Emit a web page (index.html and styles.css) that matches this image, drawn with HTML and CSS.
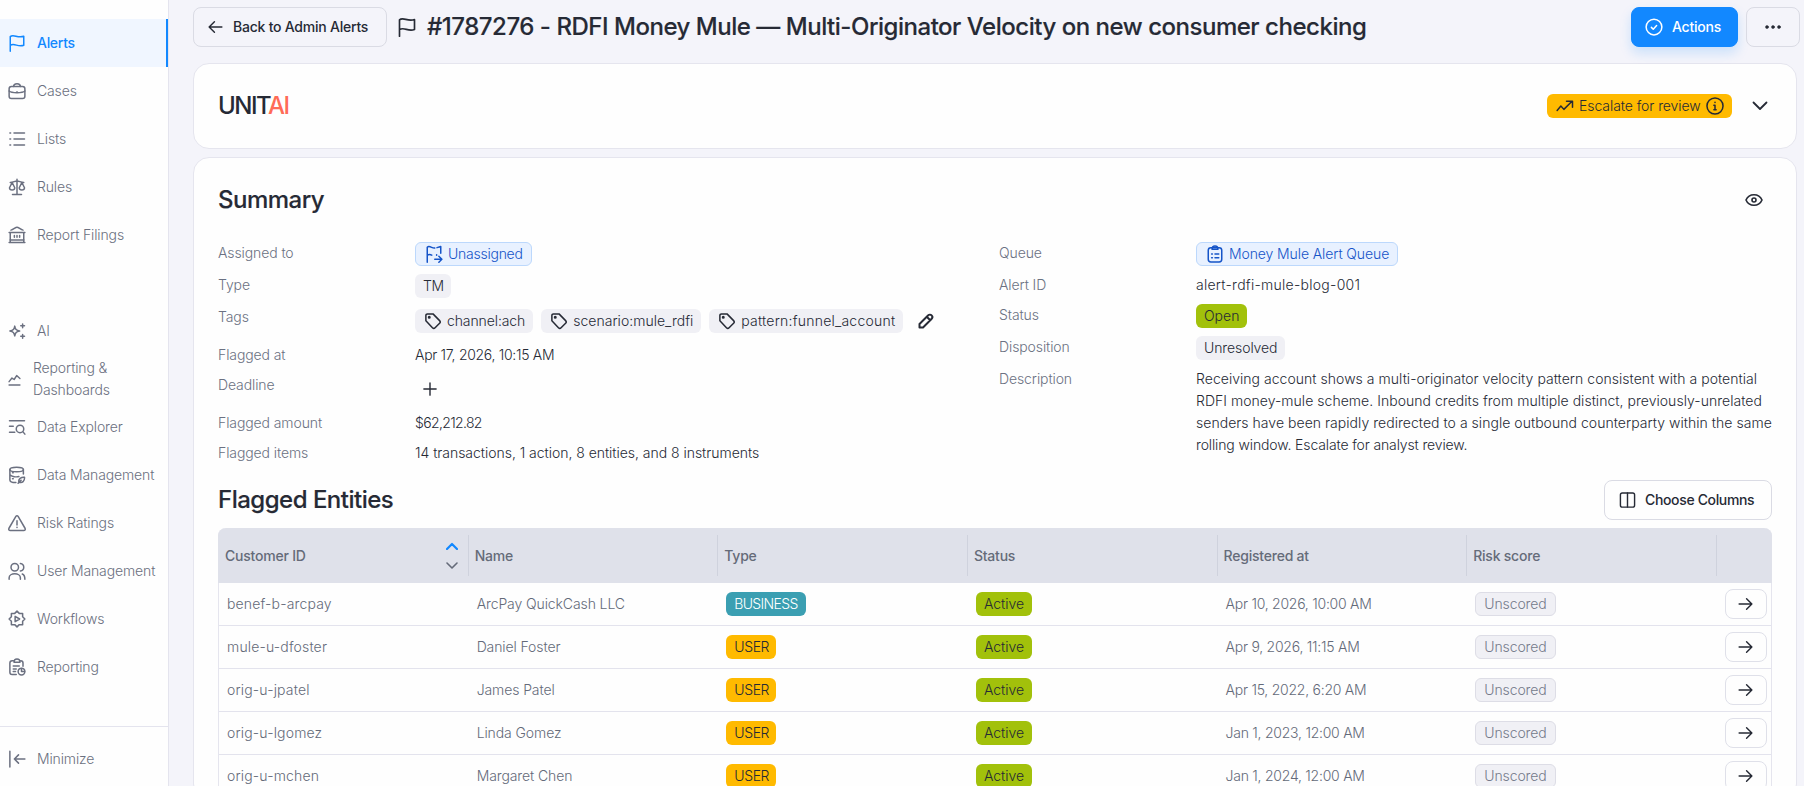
FILE: index.html
```html
<!DOCTYPE html>
<html lang="en">

<head>
  <meta charset="UTF-8">
  <meta name="viewport" content="width=device-width, initial-scale=1.0">
  <title>Alert #1787276</title>
  <link rel="stylesheet" href="styles.css">
</head>

<body>

  <!-- Shared icons -->
  <svg class="sprite" width="0" height="0">
    <symbol id="flag" viewBox="0 0 24 24"><path d="M3 23V3.500c4-4 10 2.500 18-.5v12c-8 3-12-3.500-18 0"/></symbol>
    <symbol id="arrow" viewBox="0 0 24 24"><path d="M3 12h18M13.500 4.500L21 12l-7.500 7.500"/></symbol>
    <symbol id="tag" viewBox="0 0 24 24"><path d="M2.500 4.500v7.200L11.300 21a2.500 2.500 0 0 0 3.500 0l6-6a2.500 2.500 0 0 0 0-3.500L12 2.500H4.500a2 2 0 0 0-2 2z"/><circle cx="7" cy="7" r="1"/></symbol>
  </svg>

  <div class="app">
    <nav class="sidebar">
      <a class="nav-item active"><svg><use href="#flag"/></svg>Alerts</a>
      <a class="nav-item"><svg viewBox="0 0 24 24"><rect x="1.500" y="6" width="21" height="16" rx="3"/><path d="M7.500 6c0-5 9-5 9 0M1.500 12c3 3 18 3 21 0M12 13v1"/></svg>Cases</a>
      <a class="nav-item"><svg viewBox="0 0 24 24"><path d="M8 4h14M8 12h14M8 20h14M2.500 4h1M2.500 12h1M2.500 20h1"/></svg>Lists</a>
      <a class="nav-item"><svg viewBox="0 0 24 24"><path d="M12 1.500V22M6 22h12M3 6c4 0 6-2 9-2s5 2 9 2M5.500 6L2 13c0 4 7 4 7 0zM18.500 6L15 13c0 4 7 4 7 0z"/></svg>Rules</a>
      <a class="nav-item"><svg viewBox="0 0 24 24"><path d="M1.500 8.500h21M3 8.500V22M21 8.500V22M1.500 22h21M2.500 18.500h19M4 5.500C7 5 10 1.500 12 1.500s5 3.500 8 4M8.500 12.500v2.500M12 12.500v2.500M15.500 12.500v2.500"/></svg>Report Filings</a>

      <a class="nav-item second-group"><svg viewBox="0 0 24 24"><path d="M9 5.500c.8 4.500 2 5.500 6.500 6.500-4.500 1-5.700 2-6.500 6.500-.8-4.500-2-5.500-6.500-6.500 4.500-1 5.700-2 6.500-6.500zM19.500 2.500v5M17 5h5M19.500 16.500v5M17 19h5"/></svg>AI</a>
      <a class="nav-item small-icon"><svg viewBox="0 0 18 18"><path d="M1.500 16.500h15M1.500 12l4-5 3 2L12 3.500l4.500 4"/></svg><span>Reporting &amp;<br>Dashboards</span></a>
      <a class="nav-item"><svg viewBox="0 0 24 24"><path d="M2 3.500h20M2 11h5M2 19h7M20 18.500l2.500 3"/><circle cx="16" cy="14.500" r="5"/></svg>Data Explorer</a>
      <a class="nav-item"><svg viewBox="0 0 24 24"><ellipse cx="11.500" cy="4.500" rx="9" ry="3"/><path d="M2.500 4.500v14c0 2 3 3.500 8 3.500M20.500 4.500v6M2.500 11.500c2 3 9 3.500 12 2.500M6 9h1M6 17h1M14.500 21.500c-1-4 3-7 7.500-6.500.5 5-3 8.500-7.500 6.500zM13.500 23l4-4"/></svg>Data Management</a>
      <a class="nav-item"><svg viewBox="0 0 24 24"><path d="M10.500 3.200L1.300 19c-.8 1.500 0 3 1.700 3h18c1.700 0 2.500-1.500 1.700-3L13.500 3.200c-.8-1.300-2.200-1.300-3 0zM12 9v5.500M12 17.500v.5"/></svg>Risk Ratings</a>
      <a class="nav-item"><svg viewBox="0 0 24 24"><circle cx="9" cy="7" r="5"/><path d="M1.500 23v-2c0-7 15-7 15 0v2M16.500 2c6 1 6 9 0 10M19 16c2.500 1 3.500 3 3.500 7"/></svg>User Management</a>
      <a class="nav-item"><svg viewBox="0 0 24 24"><path d="M12 1.500l3 3h4.500V9l3 3-3 3v4.500H15l-3 3-3-3H4.500V15l-3-3 3-3V4.500H9zM9.500 8.500v7l6-3.500z"/></svg>Workflows</a>
      <a class="nav-item"><svg viewBox="0 0 24 24"><path d="M7 3.500H5.500a3 3 0 0 0-3 3V19a3 3 0 0 0 3 3H11M17 3.500a3 3 0 0 1 3 3V11M8 5.500h8c0-5.500-8-5.500-8 0zM7 10.500h8M7 14.500h4M7 18h3"/><circle cx="18" cy="18" r="4.500"/><path d="M18 14v4h4"/></svg>Reporting</a>

      <a class="nav-item minimize"><svg viewBox="0 0 24 24"><path d="M2.500 1.500v21M8.500 12h14M14 6.500L8.500 12l5.500 5.500"/></svg>Minimize</a>
    </nav>

    <main class="content">
      <header class="page-header">
        <button class="btn back"><svg class="flip"><use href="#arrow"/></svg>Back to Admin Alerts</button>
        <svg class="title-flag"><use href="#flag"/></svg>
        <h1>#1787276 - RDFI Money Mule — Multi-Originator Velocity on new consumer checking</h1>
        <button class="btn primary"><svg viewBox="0 0 24 24"><circle cx="12" cy="12" r="10.500"/><path d="M8.500 12.500l2.500 2.500 4.500-5"/></svg>Actions</button>
        <button class="btn more"><svg viewBox="0 0 18 18"><circle cx="3" cy="9" r="1.500"/><circle cx="9" cy="9" r="1.500"/><circle cx="15" cy="9" r="1.500"/></svg></button>
      </header>

      <section class="card ai-card">
        <div class="logo">UNIT<span>AI</span></div>
        <div class="badge escalate">
          <svg viewBox="0 0 24 24"><path d="M1.500 18l5-6 4 4.500L21 6M14 5.500h8v8"/></svg>
          <b>Escalate for review</b>
          <svg class="info" viewBox="0 0 24 24"><circle cx="12" cy="12" r="10.700"/><path d="M10.500 11H12v5.500M10.500 17h3M12 7v.3"/></svg>
        </div>
        <svg class="chevron" viewBox="0 0 16 16"><path d="M1.500 4.500L8 11l6.500-6.500"/></svg>
      </section>

      <section class="card">
        <div class="section-head summary-head">
          <h2>Summary</h2>
          <svg class="eye" viewBox="0 0 18 18"><path d="M1 9c3-7 13-7 16 0-3 7-13 7-16 0z"/><circle cx="9" cy="9" r="2"/></svg>
        </div>

        <div class="summary">
          <dl>
            <dt>Assigned to</dt>
            <dd><span class="badge blue unassigned"><svg viewBox="0 0 24 24"><path d="M3 23V3c3-3 7 2 10 1M3 13.500c3-1.500 4-1 6 0M16 3.500l5-1.500v9M15.500 13v.5M13 19h9M18.500 15l4 4-4 4"/></svg>Unassigned</span></dd>
            <dt>Type</dt>
            <dd><span class="badge tm">TM</span></dd>
            <dt>Tags</dt>
            <dd class="tags">
              <span class="badge tag"><svg><use href="#tag"/></svg><i>channel:ach</i></span>
              <span class="badge tag scenario"><svg><use href="#tag"/></svg><i>scenario:mule_rdfi</i></span>
              <span class="badge tag pattern"><svg><use href="#tag"/></svg><i>pattern:funnel_account</i></span>
              <svg class="pencil" viewBox="0 0 16 16"><path d="M1.500 14.500V11l8.500-8.500c2.500-2.500 6 1 3.500 3.500L5 14.500zM9 4l3 3"/></svg>
            </dd>
            <dt>Flagged at</dt>
            <dd class="date">Apr 17, 2026, 10:15 AM</dd>
            <dt>Deadline</dt>
            <dd class="deadline"><svg viewBox="0 0 16 16"><path d="M8 1v14M1 8h14"/></svg></dd>
            <dt>Flagged amount</dt>
            <dd class="amount">$62,212.82</dd>
            <dt>Flagged items</dt>
            <dd class="items">14 transactions, 1 action, 8 entities, and 8 instruments</dd>
          </dl>
          <dl>
            <dt>Queue</dt>
            <dd><span class="badge blue"><svg viewBox="0 0 24 24"><rect x="3" y="3.500" width="18" height="19" rx="3.500"/><path d="M8 5.500h8c0-5.500-8-5.500-8 0zM7.500 12h1M12 12h5M7.500 17h1M12 17h5"/></svg>Money Mule Alert Queue</span></dd>
            <dt>Alert ID</dt>
            <dd class="alert-id">alert-rdfi-mule-blog-001</dd>
            <dt>Status</dt>
            <dd><span class="badge green">Open</span></dd>
            <dt>Disposition</dt>
            <dd><span class="badge">Unresolved</span></dd>
            <dt>Description</dt>
            <dd class="description">Receiving account shows a multi-originator velocity pattern consistent with a potential<br>RDFI money-mule scheme. Inbound credits from multiple distinct, previously-unrelated<br>senders have been rapidly redirected to a single outbound counterparty within the same<br><span>rolling window. Escalate for analyst review.</span></dd>
          </dl>
        </div>

        <div class="section-head entities-head">
          <h2>Flagged Entities</h2>
          <button class="btn white"><svg viewBox="0 0 18 18"><rect x="1.500" y="1.500" width="15" height="15" rx="2"/><path d="M9 1.500v15"/></svg>Choose Columns</button>
        </div>

        <div class="table">
          <div class="row head">
            <div>Customer ID
              <span class="sort"><svg class="up" viewBox="0 0 12 8"><path d="M1 7l5-5 5 5"/></svg><svg viewBox="0 0 12 8"><path d="M1 1l5 5 5-5"/></svg></span>
            </div>
            <div>Name</div>
            <div>Type</div>
            <div>Status</div>
            <div>Registered at</div>
            <div>Risk score</div>
            <div></div>
          </div>
          <div class="row">
            <div class="id">benef-b-arcpay</div>
            <div>ArcPay QuickCash LLC</div>
            <div><span class="badge teal">BUSINESS</span></div>
            <div><span class="badge green">Active</span></div>
            <div class="date">Apr 10, 2026, 10:00 AM</div>
            <div><span class="badge unscored">Unscored</span></div>
            <div><button class="open"><svg><use href="#arrow"/></svg></button></div>
          </div>
          <div class="row">
            <div class="id">mule-u-dfoster</div>
            <div>Daniel Foster</div>
            <div><span class="badge yellow">USER</span></div>
            <div><span class="badge green">Active</span></div>
            <div class="date">Apr 9, 2026, 11:15 AM</div>
            <div><span class="badge unscored">Unscored</span></div>
            <div><button class="open"><svg><use href="#arrow"/></svg></button></div>
          </div>
          <div class="row">
            <div class="id">orig-u-jpatel</div>
            <div>James Patel</div>
            <div><span class="badge yellow">USER</span></div>
            <div><span class="badge green">Active</span></div>
            <div class="date">Apr 15, 2022, 6:20 AM</div>
            <div><span class="badge unscored">Unscored</span></div>
            <div><button class="open"><svg><use href="#arrow"/></svg></button></div>
          </div>
          <div class="row">
            <div class="id">orig-u-lgomez</div>
            <div>Linda Gomez</div>
            <div><span class="badge yellow">USER</span></div>
            <div><span class="badge green">Active</span></div>
            <div class="date">Jan 1, 2023, 12:00 AM</div>
            <div><span class="badge unscored">Unscored</span></div>
            <div><button class="open"><svg><use href="#arrow"/></svg></button></div>
          </div>
          <div class="row">
            <div class="id">orig-u-mchen</div>
            <div>Margaret Chen</div>
            <div><span class="badge yellow">USER</span></div>
            <div><span class="badge green">Active</span></div>
            <div class="date">Jan 1, 2024, 12:00 AM</div>
            <div><span class="badge unscored">Unscored</span></div>
            <div><button class="open"><svg><use href="#arrow"/></svg></button></div>
          </div>
        </div>
      </section>
    </main>
  </div>

</body>

</html>
```
FILE: styles.css
```css
* {
  box-sizing: border-box;
}

body {
  margin: 0;
  font-family: "Inter", "Liberation Sans", sans-serif;
  font-size: 14px;
  font-weight: 350;
  line-height: 22px;
  letter-spacing: -0.1px;
  color: #262a35;
  background-color: #f4f4fa;
  overflow: hidden;
}

svg {
  flex: none;
  width: 18px;
  height: 18px;
  fill: none;
  stroke: currentColor;
  stroke-width: 2;
  stroke-linecap: round;
  stroke-linejoin: round;
}

.sprite {
  position: absolute;
  width: 0;
  height: 0;
}

h1, h2, dl, dd {
  margin: 0;
}

h1, h2 {
  font-size: 24px;
  line-height: 32px;
  font-weight: 500;
  letter-spacing: -0.475px;
  white-space: nowrap;
  -webkit-text-stroke: 0.15px currentColor;
}

h2 {
  letter-spacing: -0.5px;
}

.app {
  display: flex;
  height: 786px;
}

/* Sidebar */
.sidebar {
  display: flex;
  flex-direction: column;
  flex: none;
  width: 169px;
  padding-top: 19px;
  background-color: #fefefe;
  border-right: 1px solid #e4e4ee;
}

.nav-item {
  display: flex;
  align-items: center;
  gap: 11px;
  flex: none;
  height: 48px;
  padding-left: 8px;
  letter-spacing: -0.13px;
  color: #6b7080;
  white-space: nowrap;
}

.nav-item.active {
  color: #1288ff;
  font-weight: 550;
  letter-spacing: -0.3px;
  background-color: #f0f6ff;
  border-right: 2px solid #1288ff;
}

.second-group {
  margin-top: 48px;
}

.small-icon {
  gap: 12px;
}

.small-icon svg {
  width: 13px;
  height: 13px;
}

.minimize {
  height: 60px;
  margin-top: auto;
  padding-top: 5px;
  border-top: 1px solid #e4e4ee;
}

/* Header */
.content {
  flex: 1;
  padding: 7px 4px 0 24px;
}

.page-header {
  display: flex;
  align-items: center;
  height: 40px;
  margin-bottom: 16px;
}

.btn {
  display: flex;
  align-items: center;
  flex: none;
  height: 40px;
  padding: 0 16px;
  font: inherit;
  font-weight: 550;
  letter-spacing: -0.23px;
  white-space: nowrap;
  color: #262a35;
  background-color: transparent;
  border: 1px solid #dadbe4;
  border-radius: 8px;
}

.back {
  width: 194px;
  padding: 0 13px;
  gap: 9px;
}

.back svg,
.open svg {
  width: 17px;
}

.flip {
  transform: scaleX(-1);
}

.title-flag {
  width: 20px;
  height: 20px;
  margin: 0 10px 0 10px;
}

.primary {
  width: 107px;
  margin-left: auto;
  padding: 0 13px;
  gap: 9px;
  color: #fff;
  background-color: #1288ff;
  border-color: #1288ff;
  box-shadow: 0 6px 12px rgba(18, 136, 255, 0.18);
}

.more {
  width: 54px;
  margin-left: 8px;
  justify-content: center;
}

.more svg {
  fill: currentColor;
  stroke-width: 0.5;
}

/* Cards */
.card {
  width: 1604px;
  padding: 0 24px;
  background-color: #fefefe;
  border: 1px solid #e5e5ee;
  border-radius: 16px;
}

.ai-card {
  display: flex;
  align-items: center;
  height: 86px;
  margin-bottom: 8px;
}

.logo {
  font-size: 24px;
  font-weight: 500;
  letter-spacing: -1.5px;
}

.logo span {
  color: #ff6b57;
}

.badge {
  display: inline-flex;
  align-items: center;
  height: 24px;
  padding: 0 8px;
  border-radius: 6px;
  color: #262a35;
  background-color: #f0f0f5;
  white-space: nowrap;
  vertical-align: top;
}

.badge b,
.badge i {
  font-style: normal;
  font-weight: inherit;
}

.escalate {
  width: 185px;
  margin-left: auto;
  margin-right: 20px;
  padding: 0 9px;
  gap: 5px;
  background-color: #ffba00;
}

.escalate b {
  letter-spacing: -0.07px;
}

.chevron {
  width: 16px;
  height: 16px;
  margin-right: 4px;
  stroke-width: 1.800;
}

.section-head {
  display: flex;
  align-items: center;
  justify-content: space-between;
  height: 40px;
}

.summary-head {
  margin: 22px 0;
}

.eye {
  margin-right: 9px;
  stroke-width: 1.600;
}

.summary {
  display: grid;
  grid-template-columns: 773px 773px;
  gap: 8px;
}

dl {
  display: grid;
  grid-template-columns: 197px 1fr;
  row-gap: 8px;
  align-content: start;
}

dt {
  color: #6b7182;
}

.badge.blue {
  gap: 5px;
  padding: 0 8px 0 9px;
  color: #1554c8;
  background-color: #e8f1ff;
  border: 1px solid #bcd8fc;
}

.badge.unassigned {
  letter-spacing: -0.25px;
}

.tm {
  padding-right: 7px;
  letter-spacing: -0.5px;
}

.tags {
  display: flex;
  align-items: center;
  gap: 8px;
  height: 30px;
}

.tag {
  gap: 5px;
  padding: 0 8px 0 9px;
}

.tag.scenario {
  letter-spacing: 0.02px;
}

.tag.pattern {
  letter-spacing: 0.22px;
}

.pencil {
  width: 16px;
  height: 16px;
  margin-left: 7px;
}

.deadline {
  height: 30px;
  padding: 8px 0 0 8px;
}

.deadline svg {
  display: block;
  width: 14px;
  height: 14px;
  stroke-width: 1.600;
}

.date {
  letter-spacing: -0.25px;
}

dd.date {
  letter-spacing: -0.3px;
}

.amount {
  letter-spacing: -0.65px;
}

.items {
  letter-spacing: -0.03px;
}

.alert-id {
  letter-spacing: 0.26px;
}

.description {
  letter-spacing: 0.035px;
  white-space: nowrap;
}

.description span {
  letter-spacing: -0.13px;
}

.entities-head {
  margin: 16px 0 8px;
}

.white {
  width: 168px;
  padding: 0 14px;
  gap: 9px;
  letter-spacing: -0.35px;
}

.white svg {
  width: 17px;
  stroke-width: 1.5;
}

.badge.green {
  letter-spacing: 0;
  background-color: #a2c10b;
}

.badge.yellow {
  padding-right: 7px;
  letter-spacing: -0.4px;
  background-color: #ffba00;
}

.badge.teal {
  letter-spacing: -0.65px;
  color: #fff;
  background-color: #3b9fb2;
}

.badge.unscored {
  color: #747a8a;
  border: 1px solid #dddde6;
}

/* Entities table */
.table {
  border: 1px solid #e5e5ee;
  border-top: none;
  border-radius: 8px 8px 0 0;
}

.row {
  display: grid;
  grid-template-columns: repeat(6, 249.650px) 1fr;
  align-items: center;
  height: 43px;
  border-bottom: 1px solid #e3e3ed;
  color: #646a79;
}

.row > div {
  padding-left: 8px;
}

.row .id {
  letter-spacing: 0.16px;
}

.row.head {
  height: 55px;
  margin: 0 -1px;
  padding: 7px 1px;
  align-items: stretch;
  background-color: #dfe1ea;
  border: none;
  border-radius: 8px 8px 0 0;
  font-weight: 550;
  letter-spacing: -0.22px;
  color: #656b79;
}

.row.head > div {
  display: flex;
  align-items: center;
  padding-left: 6px;
  border-right: 1px solid #cfd2dd;
}

.row.head > div:last-child {
  border-right: none;
}

.sort {
  display: flex;
  flex-direction: column;
  gap: 12px;
  margin-left: auto;
  margin-right: 10px;
}

.sort svg {
  width: 12px;
  height: 8px;
  stroke-width: 1.600;
}

.sort .up {
  color: #1288ff;
  stroke-width: 2.200;
}

.open {
  display: flex;
  align-items: center;
  justify-content: center;
  width: 42px;
  height: 30px;
  padding: 0;
  color: #262a35;
  background-color: #fefefe;
  border: 1px solid #dfe0e9;
  border-radius: 8px;
}
```
